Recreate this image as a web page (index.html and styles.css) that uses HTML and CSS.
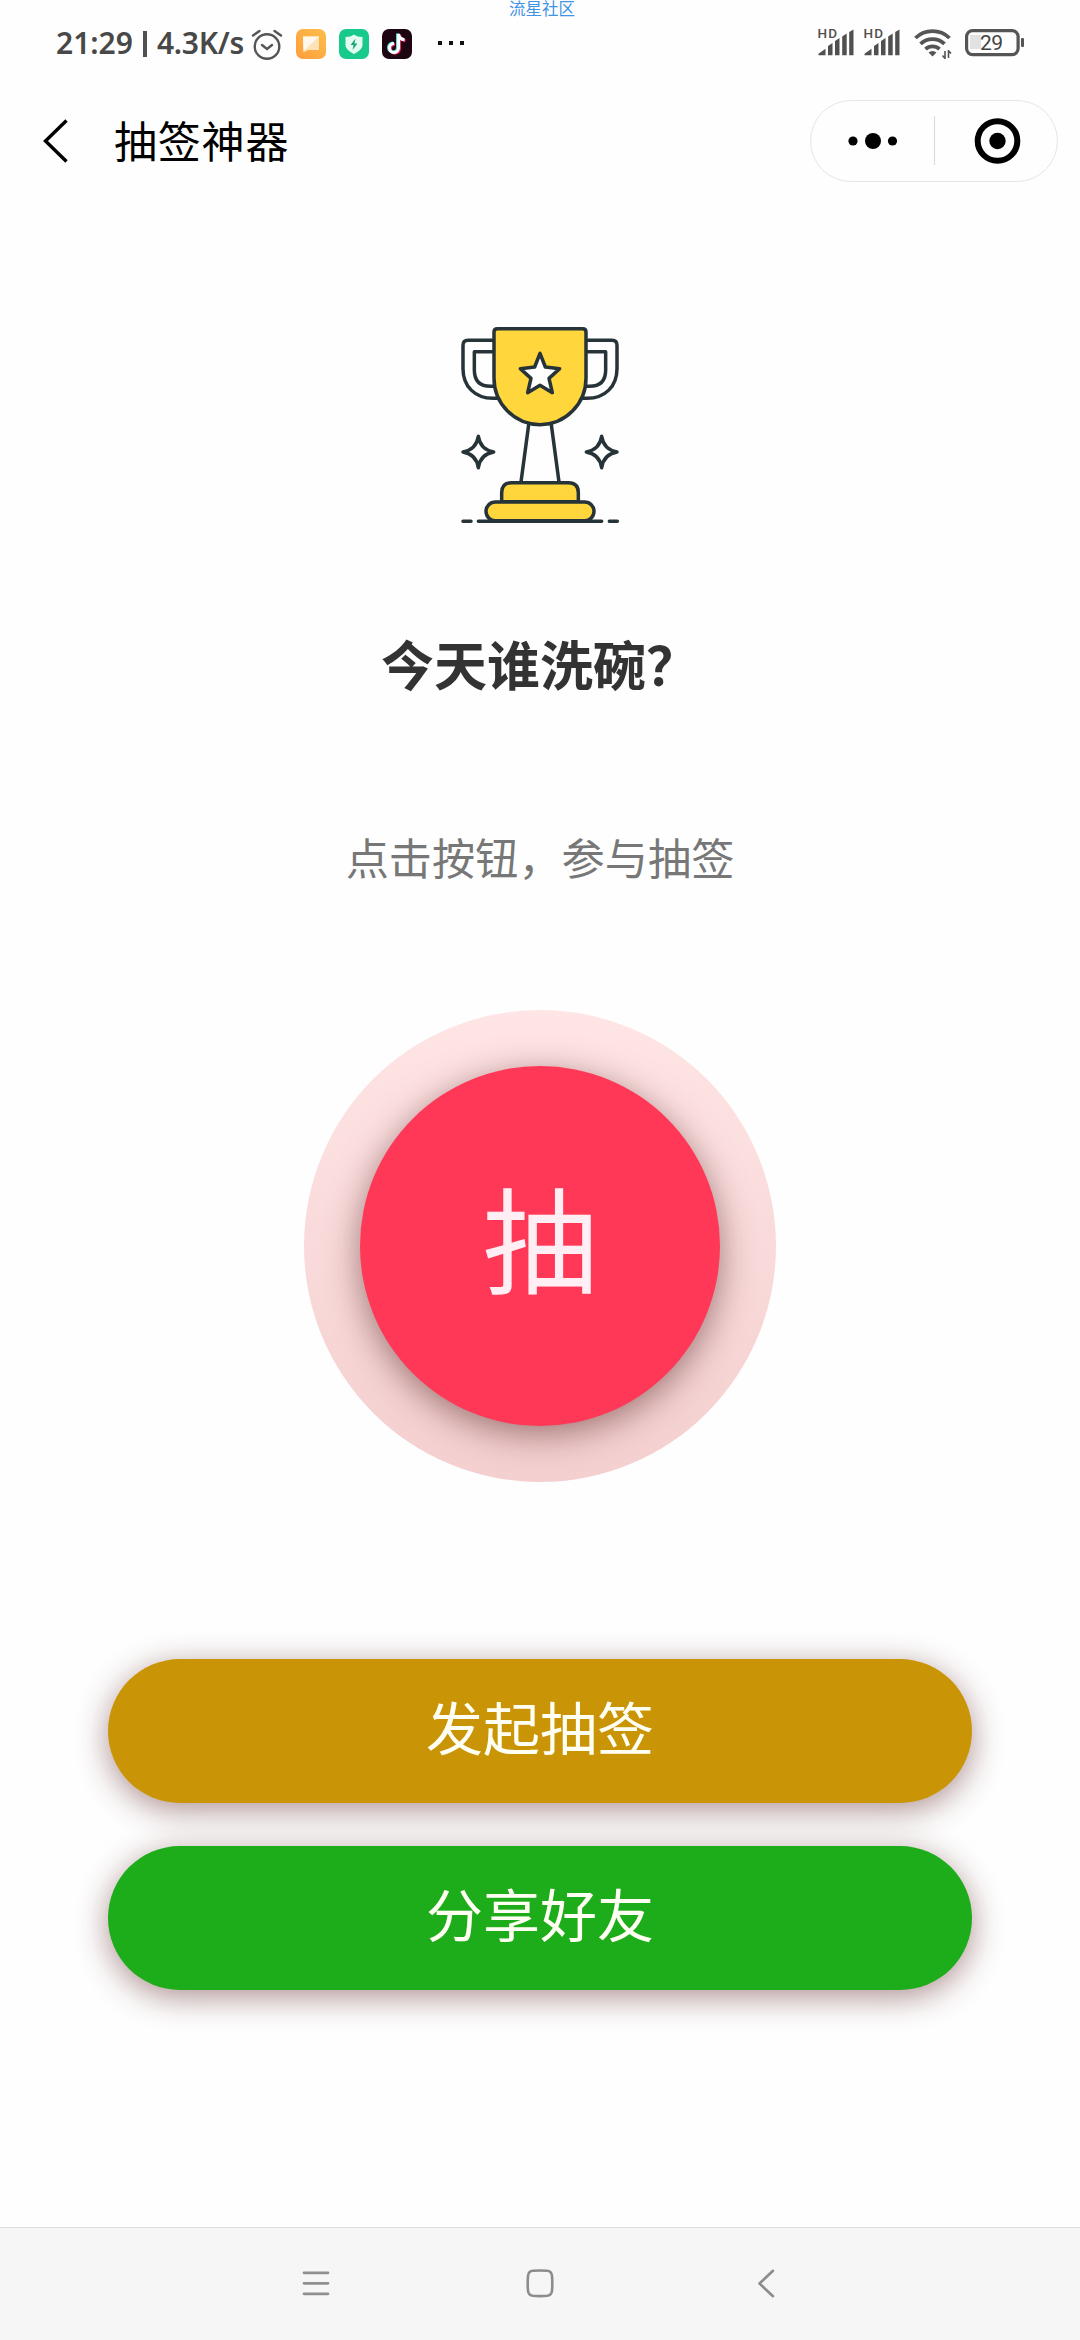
FILE: index.html
```html
<!DOCTYPE html>
<html lang="zh-CN">
<head>
<meta charset="utf-8">
<title>抽签神器</title>
<link rel="stylesheet" href="styles.css">
</head>
<body>
<div class="screen">
  <div class="community">流星社区</div>
  <header class="status">
    <div class="status-left">
      <span class="clock">21:29</span><span class="bar"></span><span class="speed">4.3K/s</span>
      <svg class="alarm" width="32" height="32" viewBox="0 0 32 32" fill="none" stroke="#555" stroke-width="2.4" stroke-linecap="round">
        <circle cx="16" cy="17.500" r="12.300"/><path d="M11 16l5 4 5-4M2 6.500L8.500 2M30 6.500L23.500 2" />
      </svg>
      <svg class="app" width="30" height="30" viewBox="0 0 30 30">
        <defs><linearGradient id="orange" x1="0" y1="1" x2="1" y2="0"><stop offset="0" stop-color="#ff9c3c"/><stop offset="1" stop-color="#fbbf4a"/></linearGradient></defs>
        <rect width="30" height="30" rx="7" fill="url(#orange)"/><path d="M7 7.500h16v13.500H12L7.500 23.500z" fill="#ffe2b8"/><path d="M7 7.500h16L7.500 22z" fill="#fff8ec"/>
      </svg>
      <svg class="app" width="30" height="30" viewBox="0 0 30 30">
        <rect width="30" height="30" rx="7" fill="#18c98c"/><path d="M15 5.500q3 2.500 8.500 2.500v8c0 4-4.500 7-8.500 9-4-2-8.500-5-8.500-9V8q5.500 0 8.500-2.500z" fill="#e4fbf1"/><path d="M16.500 9.500L11.500 16h3L13.500 21l5-6.500h-3z" fill="#18a974"/>
      </svg>
      <svg class="app" width="30" height="30" viewBox="0 0 30 30" fill="none" stroke-width="3">
        <rect width="30" height="30" rx="7" fill="#1d0612"/>
        <g transform="translate(1 .8)" stroke="#e8265b"><path d="M16.500 5v14a4.500 4.500 0 1 1-4.500-4.500M16.500 5c.5 4 3 5.500 6 5.800"/></g>
        <g transform="translate(-1 -.6)" stroke="#4de2dd"><path d="M16.500 5v14a4.500 4.500 0 1 1-4.500-4.500M16.500 5c.5 4 3 5.500 6 5.800"/></g>
        <path d="M16.500 5v14a4.500 4.500 0 1 1-4.500-4.500M16.500 5c.5 4 3 5.500 6 5.800" stroke="#fff"/>
      </svg>
      <span class="more"><i></i><i></i><i></i></span>
    </div>
    <div class="status-right">
      <svg class="signal" width="37" height="30" viewBox="0 0 37 30" fill="#505050">
        <text x="-.5" y="8.800" class="hd" textLength="19.500">HD</text>
        <path d="M.5 26.300v-1.500l7-5v6.500zM10 26.300V17l4.500-3v12.300zM17 26.300V12l4.500-3v17.300zM24.200 26.300V7.500l4.500-3v21.800zM31.200 26.300V3l4.300-2.500v25.800z"/>
      </svg>
      <svg class="signal second" width="37" height="30" viewBox="0 0 37 30" fill="#505050">
        <text x="-.5" y="8.800" class="hd" textLength="19.500">HD</text>
        <path d="M.5 26.300v-1.500l7-5v6.500zM10 26.300V17l4.500-3v12.300zM17 26.300V12l4.500-3v17.300zM24.200 26.300V7.500l4.500-3v21.800zM31.200 26.300V3l4.300-2.500v25.800z"/>
      </svg>
      <svg class="wifi" width="38" height="32" viewBox="0 0 38 32" fill="none" stroke="#555" stroke-width="3.800">
        <path d="M1.500 9a24.500 24.500 0 0 1 34 0M6.500 14.900a17.500 17.500 0 0 1 24 0M11.500 20.100a10.500 10.500 0 0 1 14 0"/>
        <path d="M14.500 23.500a6 6 0 0 1 8 0L18.500 27.500z" fill="#555" stroke="none"/>
        <path d="M31 22v8M34.500 29v-8M28.500 26.500l2.500 3M37 24.500L34.500 21.500" stroke-width="1.600"/>
      </svg>
      <svg width="60" height="28" viewBox="0 0 60 28">
        <rect x="5" y="6" width="11" height="14" fill="#e2e2e2"/>
        <rect x="1.600" y="1.600" width="51.500" height="24" rx="6" fill="none" stroke="#555" stroke-width="3.200"/>
        <rect x="56" y="9" width="3" height="9" rx="1" fill="#555"/>
        <text x="15" y="21" class="battery-level" textLength="23">29</text>
      </svg>
    </div>
  </header>

  <nav class="titlebar">
    <svg class="back" width="26" height="46" viewBox="0 0 26 46" fill="none" stroke="#000" stroke-width="3.400"><path d="M23.500 2.500L2.500 23l21 20.500"/></svg>
    <h1 class="title">抽签神器</h1>
    <div class="capsule">
      <svg width="247" height="80" viewBox="0 0 247 80">
        <circle cx="42" cy="40" r="4.600"/><circle cx="62" cy="40" r="8"/><circle cx="81.500" cy="40" r="4.600"/>
        <path d="M123.500 15v49" stroke="#dcdcdc" stroke-width="1.200"/>
        <circle cx="186.500" cy="40" r="19.800" fill="none" stroke="#000" stroke-width="6"/><circle cx="186.500" cy="40" r="8.200"/>
      </svg>
    </div>
  </nav>

  <main class="content">
    <svg class="trophy" width="200" height="240" viewBox="0 0 600 720" fill="none" stroke="#263338" stroke-width="10.500" stroke-linecap="round" stroke-linejoin="round">
      <path d="M162 121H84q-15 0-15 15v70c0 53 36 89 90 89h15M162 155h-59v55q0 49 49 49h10"/>
      <path d="M438 121h78q15 0 15 15v70c0 53-36 89-90 89h-15M438 155h59v55q0 49-49 49h-10"/>
      <path d="M266 374L243 546M334 374L357 546"/>
      <path d="M172 86h256q10 0 10 10v139a138 139 0 0 1-276 0V96q0-10 10-10z" fill="#ffd63b"/>
      <path d="M300 160l16 41 43 5-32 29 10 43-37-22-37 22 10-43-32-29 43-5z" fill="#fff"/>
      <path d="M185 605v-27q0-30 30-30h170q30 0 30 30v27z" fill="#ffd63b"/>
      <rect x="138" y="606" width="324" height="56" rx="28" fill="#ffd63b"/>
      <path d="M69 664h24M115 664h370M508 664h24"/>
      <path d="M115 409q6 40 46 47-40 7-46 47-6-40-46-47 40-7 46-47z"/>
      <path d="M485 409q6 40 46 47-40 7-46 47-6-40-46-47 40-7 46-47z"/>
    </svg>
    <h2 class="question">今天谁洗碗？</h2>
    <p class="hint">点击按钮，参与抽签</p>
    <div class="ring"><button class="draw">抽</button></div>
    <div class="actions">
      <button class="action start">发起抽签</button>
      <button class="action share">分享好友</button>
    </div>
  </main>

  <footer class="sysnav">
    <svg width="28" height="32" viewBox="0 0 28 32" stroke="#909090" stroke-width="2.800" stroke-linecap="round"><path d="M2 4.800h24M2 15.300h24M2 25.800h24"/></svg>
    <svg class="home" width="28" height="32" viewBox="0 0 28 32" fill="none" stroke="#8c8c8c" stroke-width="2.600"><path d="M7 2.800q7-.6 14 0 4.500.4 5 5 .6 7.500 0 15-.5 4.500-5 5-7 .6-14 0-4.500-.5-5-5-.6-7.500 0-15 .5-4.600 5-5z"/></svg>
    <svg width="28" height="32" viewBox="0 0 28 32" fill="none" stroke="#8c8c8c" stroke-width="2.600" stroke-linecap="round" stroke-linejoin="round"><path d="M20 2.800L6.500 15.500 20 28.200"/></svg>
  </footer>
</div>
</body>
</html>
```
FILE: styles.css
```css
* { box-sizing: border-box; margin: 0; padding: 0; }
body { background: #fefefe; font-family: "Noto Sans CJK SC", sans-serif; }
svg { display: block; flex: none; overflow: visible; }
button { border: 0; font-family: inherit; display: flex; align-items: center; justify-content: center; }

.screen { width: 1080px; height: 2340px; display: flex; flex-direction: column; overflow: hidden; }
.community { height: 17px; padding-left: 4px; text-align: center; font-size: 16.5px; line-height: 16px; color: #3f94e6; font-weight: 400; }

.status { height: 67px; padding: 12px 55px 0 56px; display: flex; justify-content: space-between; }
.status-left, .status-right { display: flex; align-items: flex-start; }
.clock, .speed { font: 600 30px/28px "Noto Sans", sans-serif; color: #484848; white-space: nowrap; }
.clock { width: 87px; }
.speed { width: 94px; letter-spacing: -.3px; }
.bar { width: 4px; height: 26px; margin: 2px 10px 0 0; background: #505050; }
.alarm { margin-right: 13px; }
.app { margin-right: 13px; }
.more { display: flex; gap: 7px; margin: 12px 0 0 13px; }
.more i { width: 4px; height: 4px; background: #111; }
.signal { margin-right: 9px; }
.second { margin-right: 13px; }
.wifi { margin-right: 13px; }
.hd { font: 500 13.5px Roboto, sans-serif; }
.battery-level { font: 400 21px Roboto, sans-serif; fill: #444; }

.titlebar { height: 113px; padding: 0 22px 0 43px; display: flex; align-items: center; }
.title { margin-left: 45px; padding-bottom: 4px; font-size: 43px; line-height: 60px; font-weight: 400; letter-spacing: .8px; color: #000; }
.capsule { width: 248px; height: 82px; margin-left: auto; border: 1px solid #e6e6e6; border-radius: 41px; display: flex; justify-content: center; }

.content { flex: 1; display: flex; flex-direction: column; align-items: center; padding-top: 103px; }
.question { margin-top: 85px; font-size: 53px; line-height: 76px; font-weight: 700; color: #333; }
.hint { margin-top: 125px; font-size: 43.2px; line-height: 60px; color: #777; }
.ring { width: 472px; height: 472px; margin-top: 124px; border-radius: 50%; display: flex; align-items: center; justify-content: center; background: linear-gradient(#ffe5e5, #f4cfcf); }
.draw { width: 360px; height: 360px; padding-bottom: 23px; border-radius: 50%; background: #ff3858; color: #ffeff5; font-size: 115px; line-height: 160px; box-shadow: 0 8px 34px rgba(70, 20, 20, .5); }
.actions { margin-top: 177px; width: 864px; display: flex; flex-direction: column; gap: 43px; }
.action { height: 144px; padding-bottom: 12px; border-radius: 72px; color: #fffff4; font-size: 57px; line-height: 80px; box-shadow: 0 7px 32px rgba(85, 25, 25, .48); }
.start { background: #c99507; }
.share { background: #1dac1a; }

.sysnav { height: 113px; padding: 0 299px 0 302px; display: flex; align-items: center; justify-content: space-between; background: #f6f6f6; border-top: 1px solid #dcdcdc; }
.home { margin-right: 4px; }
```
